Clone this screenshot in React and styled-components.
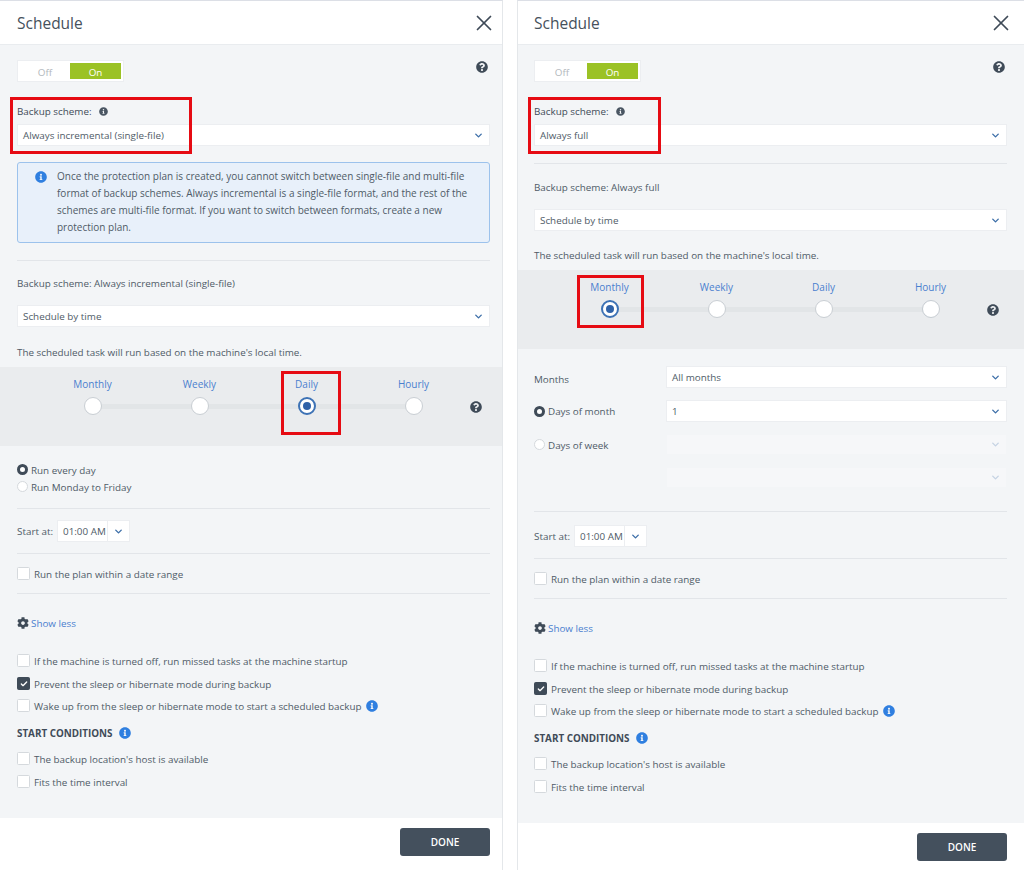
import React from "react";
import styled, { createGlobalStyle } from "styled-components";
import { X, ChevronDown, Check } from "lucide-react";
import { FaQuestionCircle, FaInfoCircle, FaCog } from "react-icons/fa";

const Global = createGlobalStyle`
  html, body { margin: 0; padding: 0; background: #fff; }
  body { font-family: "Open Sans", "Liberation Sans", sans-serif; font-size: 9.85px; color: #4f5b67; }
`;

const Page = styled.div`
  width: 1024px; height: 870px; display: flex; justify-content: space-between; overflow: hidden;
`;
const Panel = styled.section`
  position: relative; display: flex; flex-direction: column; height: 870px; box-sizing: border-box;
  width: ${p => p.$wide ? "507px" : "503px"};
  border-top: 1px solid #dcdfe6;
  border-left: ${p => p.$wide ? "1px solid #e4e7ea" : "0"};
  border-right: ${p => p.$wide ? "0" : "1px solid #e4e7ea"};
  --pad-right: ${p => p.$wide ? "17px" : "12px"};
  --pad-left: ${p => p.$wide ? "16px" : "17px"};
`;
const Header = styled.header`
  height: 44px; flex: none; display: flex; align-items: center; justify-content: space-between;
  padding: 0 var(--pad-right) 0 var(--pad-left); background: #fff; box-sizing: border-box;
  border-bottom: 1px solid #e9ecef;
`;
const Title = styled.h1`
  margin: 0; font-size: 15.5px; font-weight: 400; color: #46515c; line-height: 44px;
`;
const Close = styled.button`
  border: 0; background: none; padding: 0; display: flex; color: #3e4a57; margin-right: -6.5px;
`;
const Body = styled.div`
  flex: 1; background: #f3f5f7; display: flex; flex-direction: column;
`;
const Section = styled.div`
  padding: ${p => p.$pad || "0"} var(--pad-right) 0 var(--pad-left);
`;
const ToggleRow = styled.div`
  display: flex; justify-content: space-between; align-items: flex-start; padding-right: 2px;
`;
const Toggle = styled.div`
  display: flex; width: 107px; height: 22px; box-sizing: border-box; padding: 2px; background: #fff;
  border: 1px solid #eceef1;
`;
const ToggleOff = styled.span`
  flex: 1; text-align: center; line-height: 18px; color: #b3b8bd;
`;
const ToggleOn = styled.span`
  width: 51px; text-align: center; line-height: 18px; color: #fff; background: #9bc225;
`;
const HelpIcon = styled(FaQuestionCircle)`
  color: #3f4b58; width: 12px; height: 12px; flex: none; margin-top: ${p => p.$top || "0"};
  margin-left: ${p => p.$left || "0"};
`;
const Label = styled.div`
  display: flex; align-items: center; gap: 7px; height: 16px; color: #3f4b58; line-height: 16px; margin-top: 21px;
`;
const SmallInfo = styled(FaInfoCircle)`
  width: 9px; height: 9px; color: #4a5663;
`;
const SelectBox = styled.div`
  display: flex; align-items: center; justify-content: space-between; box-sizing: border-box;
  height: ${p => p.$h || "22px"}; padding: 0 5px 0 5px; background: ${p => p.$disabled ? "#f6f7f9" : "#fff"};
  border: 1px solid ${p => p.$disabled ? "#f3f5f7" : "#eceef1"}; color: #4f5b67; flex: 1;
  margin-top: ${p => p.$top || "0"};
  svg { color: ${p => p.$disabled ? "#c5d3e3" : "#3c6ea8"}; }
`;
const Chevron = styled(ChevronDown).attrs({ size: 11, strokeWidth: 3 })`
  flex: none;
`;
const InfoBox = styled.div`
  display: flex; gap: 10px; box-sizing: border-box; height: 81px; margin-top: 16px; padding: 5px 10px 0 17px;
  background: #e8f0fa; border: 1px solid #9cc2ec; border-radius: 3px; line-height: 17px; color: #4f5b67;
  font-size: 10px;
`;
const BlueInfo = styled(FaInfoCircle)`
  width: 12px; height: 12px; color: #2f7fe0; flex: none; margin-top: ${p => p.$top || "0"};
  margin-left: ${p => p.$left || "0"};
`;
const Divider = styled.hr`
  margin: ${p => p.$m || "0"}; border: 0; height: 1px; background: #e2e5e9;
`;
const Text = styled.div`
  line-height: 16px; margin-top: ${p => p.$top || "0"}; color: #4f5b67;
`;
const Band = styled.div`
  margin-top: ${p => p.$top}; height: 79px; background: #eaecee; display: flex; align-items: flex-start;
  padding-left: ${p => p.$left}; box-sizing: border-box;
`;
const Stops = styled.div`
  position: relative; display: flex; width: 428px;
`;
const Track = styled.div`
  position: absolute; left: 53px; right: 53px; top: 37px; height: 5px; background: #e2e5e7;
`;
const Stop = styled.div`
  position: relative; width: 107px; display: flex; flex-direction: column; align-items: center;
  padding-top: 9px;
`;
const StopLabel = styled.span`
  color: #4a80cf; line-height: 16px; height: 16px; font-size: 10px;
`;
const Handle = styled.span`
  width: 18px; height: 18px; box-sizing: border-box; border-radius: 50%; background: #fff; margin-top: 5px;
  border: ${p => p.$on ? "2px solid #3d72b5" : "1px solid #c9ced3"}; display: flex; align-items: center; justify-content: center;
  &::after { content: ""; width: 8px; height: 8px; border-radius: 50%; background: ${p => p.$on ? "#2f62a8" : "transparent"}; }
`;
const RadioRow = styled.div`
  display: flex; align-items: center; gap: 3px; height: 17px; color: #4f5b67;
`;
const RadioDot = styled.span`
  width: 11px; height: 11px; border-radius: 50%; box-sizing: border-box; flex: none;
  background: #fff; border: ${p => p.$on ? "3px solid #3f4b58" : "1px solid #d5d9dd"};
`;
const StartRow = styled.div`
  display: flex; align-items: center; gap: 4px; height: 22px;
`;
const TimeBox = styled.div`
  display: flex; align-items: stretch; height: 22px; background: #fff; box-sizing: border-box; width: 73px;
  border: 1px solid #eceef1; color: #4f5b67;
`;
const TimeValue = styled.span`
  width: 50px; padding-left: 5px; box-sizing: border-box; line-height: 20px; border-right: 1px solid #eceef1; white-space: nowrap;
`;
const TimeArrow = styled.span`
  flex: 1; display: flex; align-items: center; justify-content: center; color: #3c6ea8;
`;
const CheckRow = styled.label`
  display: flex; align-items: center; gap: 4px; height: 17px; margin-top: ${p => p.$top || "0"}; color: #4f5b67; white-space: nowrap;
`;
const Box = styled.span`
  width: 11px; height: 11px; flex: none; border-radius: 1.5px; display: flex; align-items: center; justify-content: center;
  background: ${p => p.$on ? "#3f4b58" : "#fff"}; border: 0.5px solid ${p => p.$on ? "#3f4b58" : "#d5d9dd"}; color: #fff;
`;
const ShowLess = styled.div`
  display: flex; align-items: center; gap: 2px; height: 16px; color: #4a80cf; margin-top: 21px;
`;
const Gear = styled(FaCog)`
  width: 12px; height: 12px; color: #3f4b58;
`;
const Heading = styled.div`
  display: flex; align-items: center; gap: 6px; height: 16px; font-weight: 700; color: #3f4b58;
  margin-top: 11px;
`;
const Footer = styled.footer`
  flex: none; height: ${p => p.$h}; background: #fff; display: flex; justify-content: flex-end;
  padding: 10px var(--pad-right) 0 0; box-sizing: border-box;
`;
const Done = styled.button`
  width: 90px; height: 28px; border: 0; border-radius: 3px; background: #44505d; color: #fff;
  font: 600 10px "Open Sans", sans-serif;
`;
const FieldGrid = styled.div`
  display: grid; grid-template-columns: 132px 1fr; row-gap: 12px; align-items: center;
`;
const FieldLabel = styled.span`
  padding-top: 3px;
`;
const Spacer = styled.div`
  flex: 1;
`;
const Highlight = styled.div`
  position: absolute; box-sizing: border-box; border: 3px solid #e60b13; pointer-events: none;
  left: ${p => p.$x}px; top: ${p => p.$y}px; width: ${p => p.$w}px; height: ${p => p.$h}px;
`;

const Head = () => (
  <Header>
    <Title>Schedule</Title>
    <Close aria-label="Close"><X size={26} strokeWidth={1.6} /></Close>
  </Header>
);

const Controls = ({ scheme }) => (
  <Section $pad="15px">
    <ToggleRow>
      <Toggle><ToggleOff>Off</ToggleOff><ToggleOn>On</ToggleOn></Toggle>
      <HelpIcon $top="1px" />
    </ToggleRow>
    <Label>Backup scheme: <SmallInfo /></Label>
    <SelectBox $top="5px">{scheme}<Chevron /></SelectBox>
  </Section>
);

const Slider = ({ active, left }) => (
  <Band $top="7px" $left={left}>
    <Stops>
      <Track />
      {["Monthly", "Weekly", "Daily", "Hourly"].map(s => (
        <Stop key={s}><StopLabel>{s}</StopLabel><Handle $on={s === active} /></Stop>
      ))}
    </Stops>
    <HelpIcon $top="34px" $left="3px" />
  </Band>
);

const Lower = () => (
  <>
    <ShowLess><Gear /> Show less</ShowLess>
    <CheckRow $top="21px"><Box />If the machine is turned off, run missed tasks at the machine startup</CheckRow>
    <CheckRow $top="6px"><Box $on><Check size={8} strokeWidth={4} /></Box>Prevent the sleep or hibernate mode during backup</CheckRow>
    <CheckRow $top="5px"><Box />Wake up from the sleep or hibernate mode to start a scheduled backup<BlueInfo $left="1px" /></CheckRow>
    <Heading>START CONDITIONS <BlueInfo /></Heading>
    <CheckRow $top="9px"><Box />The backup location's host is available</CheckRow>
    <CheckRow $top="6px"><Box />Fits the time interval</CheckRow>
  </>
);

const Start = () => (
  <StartRow>
    Start at:
    <TimeBox><TimeValue>01:00 AM</TimeValue><TimeArrow><Chevron /></TimeArrow></TimeBox>
  </StartRow>
);

export default function App() {
  return (
    <Page>
      <Global />
      <Panel>
        <Head />
        <Body>
          <Controls scheme="Always incremental (single-file)" />
          <Section>
            <InfoBox>
              <BlueInfo $top="3px" />
              <span>Once the protection plan is created, you cannot switch between single-file and multi-file format of backup schemes. Always incremental is a single-file format, and the rest of the schemes are multi-file format. If you want to switch between formats, create a new protection plan.</span>
            </InfoBox>
            <Divider $m="17px 0 0" />
            <Text $top="14px">Backup scheme: Always incremental (single-file)</Text>
            <SelectBox $top="14px">Schedule by time<Chevron /></SelectBox>
            <Text $top="17px">The scheduled task will run based on the machine's local time.</Text>
          </Section>
          <Slider active="Daily" left="39px" />
          <Section $pad="15px">
            <RadioRow><RadioDot $on />Run every day</RadioRow>
            <RadioRow><RadioDot />Run Monday to Friday</RadioRow>
            <Divider $m="13px 0 11px" />
            <Start />
            <Divider $m="11px 0 0" />
            <CheckRow $top="11px"><Box />Run the plan within a date range</CheckRow>
            <Divider $m="11px 0 0" />
            <Lower />
          </Section>
          <Spacer />
        </Body>
        <Footer $h="52px"><Done>DONE</Done></Footer>
        <Highlight $x={10} $y={96} $w={182} $h={57} />
        <Highlight $x={281} $y={370} $w={60} $h={64} />
      </Panel>
      <Panel $wide>
        <Head />
        <Body>
          <Controls scheme="Always full" />
          <Section>
            <Divider $m="17px 0 0" />
            <Text $top="15px">Backup scheme: Always full</Text>
            <SelectBox $top="14px">Schedule by time<Chevron /></SelectBox>
            <Text $top="16px">The scheduled task will run based on the machine's local time.</Text>
          </Section>
          <Slider active="Monthly" left="38px" />
          <Section $pad="17px">
            <FieldGrid>
              <FieldLabel>Months</FieldLabel>
              <SelectBox>All months<Chevron /></SelectBox>
              <RadioRow><RadioDot $on />Days of month</RadioRow>
              <SelectBox>1<Chevron /></SelectBox>
              <RadioRow><RadioDot />Days of week</RadioRow>
              <SelectBox $disabled $h="21px"><span /><Chevron /></SelectBox>
              <span />
              <SelectBox $disabled $h="21px"><span /><Chevron /></SelectBox>
            </FieldGrid>
            <Divider $m="23px 0 13px" />
            <Start />
            <Divider $m="11px 0 0" />
            <CheckRow $top="11px"><Box />Run the plan within a date range</CheckRow>
            <Divider $m="11px 0 0" />
            <Lower />
          </Section>
          <Spacer />
        </Body>
        <Footer $h="47px"><Done>DONE</Done></Footer>
        <Highlight $x={10} $y={96} $w={133} $h={57} />
        <Highlight $x={59} $y={274} $w={67} $h={53} />
      </Panel>
    </Page>
  );
}
